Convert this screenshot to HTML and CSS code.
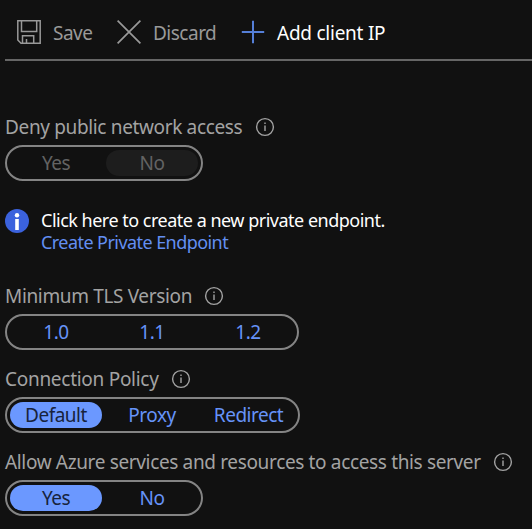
FILE: index.html
```
<!DOCTYPE html>
<html lang="en">
<head>
<meta charset="utf-8">
<title>Firewall settings</title>
<link rel="stylesheet" href="styles.css">
</head>
<body>
<svg class="defs" width="0" height="0">
  <symbol id="info" viewBox="0 0 20 20">
    <circle cx="10" cy="10" r="8.4" fill="none" stroke="currentColor" stroke-width="1.4"/>
    <path d="M10 8.5V14M10 5.5v1.5" fill="none" stroke="currentColor" stroke-width="1.4"/>
  </symbol>
</svg>
<header class="toolbar">
  <button class="command save">
    <svg width="24" height="24" viewBox="0 0 24 24" fill="none" stroke="currentColor" stroke-width="1.5"><path d="M.8.8h22.4v22.4H4L.8 20zM4.5.8v10.7h15.2V.8M5.5 23.2v-7.4h11.2v7.4M9.5 23v-4"/></svg>
    <span>Save</span>
  </button>
  <button class="command discard">
    <svg width="24" height="24" viewBox="0 0 24 24" fill="none" stroke="currentColor" stroke-width="1.7"><path d="M.6.6l22.8 22.8M23.4.6L.6 23.4"/></svg>
    <span>Discard</span>
  </button>
  <button class="command add">
    <svg width="24" height="24" viewBox="0 0 24 24" fill="none" stroke="#557fd8" stroke-width="2"><path d="M12 .8v22.4M.8 12h22.4"/></svg>
    <span>Add client IP</span>
  </button>
</header>
<main>
  <section class="field">
    <div class="label"><span class="t-deny">Deny public network access</span><svg class="info"><use href="#info"/></svg></div>
    <div class="options disabled"><span class="option">Yes</span><span class="option selected">No</span></div>
  </section>
  <aside class="notice">
    <svg width="24" height="24" viewBox="0 0 24 24"><circle cx="12" cy="12" r="12" fill="#3b62dd"/><circle cx="12" cy="6.3" r="2.2" fill="#fff"/><path d="M10.2 10h3.6v11h-3.6z" fill="#fff"/></svg>
    <div><p class="t-click">Click here to create a new private endpoint.</p><a class="t-create">Create Private Endpoint</a></div>
  </aside>
  <section class="field">
    <div class="label"><span class="t-tls">Minimum TLS Version</span><svg class="info"><use href="#info"/></svg></div>
    <div class="options"><span class="option">1.0</span><span class="option">1.1</span><span class="option">1.2</span></div>
  </section>
  <section class="field">
    <div class="label"><span class="t-policy">Connection Policy</span><svg class="info"><use href="#info"/></svg></div>
    <div class="options"><span class="option selected">Default</span><span class="option">Proxy</span><span class="option wide">Redirect</span></div>
  </section>
  <section class="field">
    <div class="label"><span class="t-allow">Allow Azure services and resources to access this server</span><svg class="info"><use href="#info"/></svg></div>
    <div class="options"><span class="option selected">Yes</span><span class="option">No</span></div>
  </section>
</main>
</body>
</html>
```
FILE: styles.css
```
* { box-sizing: border-box; }
body {
  margin: 0;
  height: 529px;
  overflow: hidden;
  background: #111;
  color: #a3a3a3;
  font: 19px/26px "Noto Sans", "Open Sans", sans-serif;
  letter-spacing: -0.5px;
  white-space: nowrap;
}
svg { display: block; flex: none; }
.defs { position: absolute; }
.toolbar {
  display: flex;
  height: 61px;
  margin-left: 5px;
  padding: 20px 0 0 12px;
  border-bottom: 2px solid #666;
}
.command {
  display: flex;
  gap: 12px;
  height: 26px;
  padding: 0;
  border: 0;
  background: none;
  color: inherit;
  font: inherit;
  letter-spacing: inherit;
}
.save { width: 100px; color: #999; }
.discard { width: 124px; color: #999; }
.add { color: #fff; letter-spacing: -0.25px; }
main { padding: 53px 0 0 5px; }
.field { height: 67px; margin-bottom: 16px; }
.label { display: flex; align-items: center; height: 26px; margin-bottom: 5px; letter-spacing: -0.35px; }
.label span { flex: none; }
.info { width: 20px; height: 20px; }
.options {
  display: inline-flex;
  gap: 4px;
  height: 36px;
  padding: 3px;
  border: 2px solid #848484;
  border-radius: 18px;
}
.option {
  width: 92px;
  height: 26px;
  border-radius: 13px;
  color: #6693f8;
  line-height: 26px;
  text-align: center;
}
.wide { width: 93px; }
.selected { background: #6b98ff; color: #17233c; }
.disabled .option { color: #636363; }
.disabled .selected { background: #1d1d1d; }
.notice {
  display: flex;
  gap: 12px;
  height: 86px;
  padding-top: 12px;
  color: #fff;
  font-size: 18px;
  line-height: 22px;
}
.notice p { margin: 0; }
.notice a { display: block; color: #638ff2; letter-spacing: -0.56px; }
.t-deny { width: 250px; }
.t-tls { width: 199px; }
.t-policy { width: 166px; letter-spacing: -0.28px; }
.t-allow { width: 488px; }
```
